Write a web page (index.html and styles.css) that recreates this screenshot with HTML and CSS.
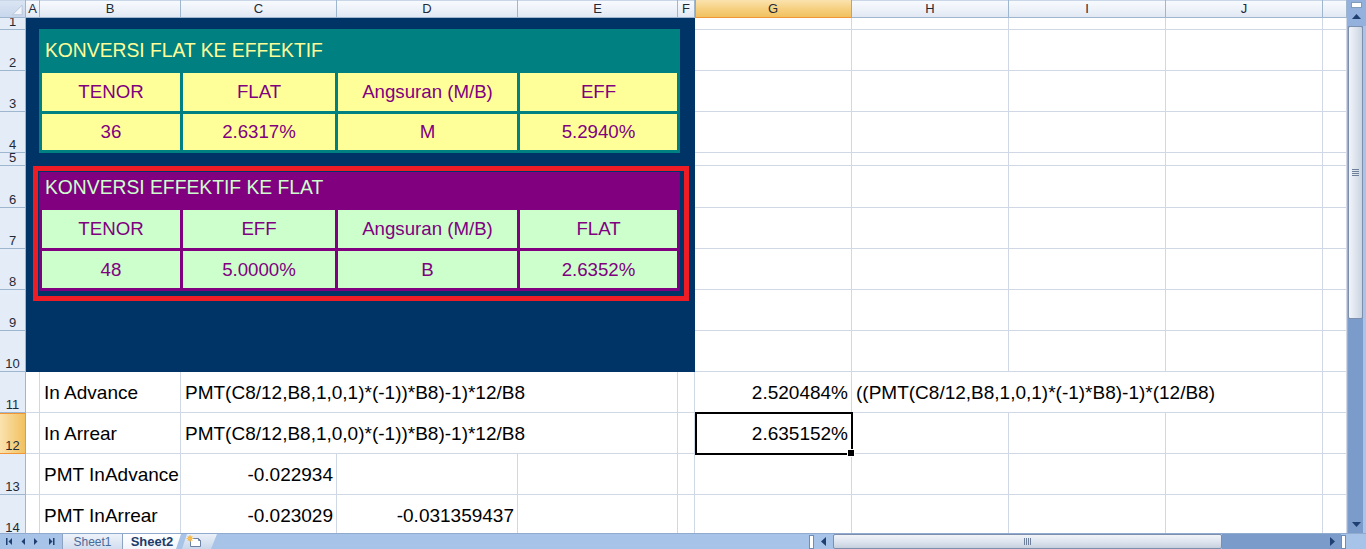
FILE: index.html
```html
<!DOCTYPE html>
<html>
<head>
<meta charset="utf-8">
<link rel="stylesheet" href="styles.css">
</head>
<body>
<div class="app">
  <div class="main">
    <div class="sheet">
      <div class="ch corner"><svg class="selall" width="26" height="18" viewBox="0 0 26 18"><polygon points="23,5 23,15 13,15" fill="#F2F5FA" stroke="#B8C6DA" stroke-width="1"/></svg></div>
      <div class="ch">A</div><div class="ch">B</div><div class="ch">C</div><div class="ch">D</div><div class="ch">E</div><div class="ch">F</div><div class="ch sel">G</div><div class="ch">H</div><div class="ch">I</div><div class="ch">J</div><div class="ch"></div>

      <div class="rh">1</div>
      <div class="navy">
        <div class="tbl t1">
          <div class="ttl">KONVERSI FLAT KE EFFEKTIF</div>
          <div class="cell">TENOR</div><div class="cell">FLAT</div><div class="cell">Angsuran (M/B)</div><div class="cell">EFF</div>
          <div class="cell">36</div><div class="cell">2.6317%</div><div class="cell">M</div><div class="cell">5.2940%</div>
        </div>
        <div class="redbox">
          <div class="tbl t2">
            <div class="ttl">KONVERSI EFFEKTIF KE FLAT</div>
            <div class="cell">TENOR</div><div class="cell">EFF</div><div class="cell">Angsuran (M/B)</div><div class="cell">FLAT</div>
            <div class="cell">48</div><div class="cell">5.0000%</div><div class="cell">B</div><div class="cell">2.6352%</div>
          </div>
        </div>
      </div>
      <div class="c"></div><div class="c"></div><div class="c"></div><div class="c"></div><div class="c"></div>
      <div class="rh">2</div><div class="c"></div><div class="c"></div><div class="c"></div><div class="c"></div><div class="c"></div>
      <div class="rh">3</div><div class="c"></div><div class="c"></div><div class="c"></div><div class="c"></div><div class="c"></div>
      <div class="rh">4</div><div class="c"></div><div class="c"></div><div class="c"></div><div class="c"></div><div class="c"></div>
      <div class="rh">5</div><div class="c"></div><div class="c"></div><div class="c"></div><div class="c"></div><div class="c"></div>
      <div class="rh">6</div><div class="c"></div><div class="c"></div><div class="c"></div><div class="c"></div><div class="c"></div>
      <div class="rh">7</div><div class="c"></div><div class="c"></div><div class="c"></div><div class="c"></div><div class="c"></div>
      <div class="rh">8</div><div class="c"></div><div class="c"></div><div class="c"></div><div class="c"></div><div class="c"></div>
      <div class="rh">9</div><div class="c"></div><div class="c"></div><div class="c"></div><div class="c"></div><div class="c"></div>
      <div class="rh">10</div><div class="c"></div><div class="c"></div><div class="c"></div><div class="c"></div><div class="c"></div>

      <div class="rh">11</div><div class="c"></div><div class="c">In Advance</div><div class="c span3">PMT(C8/12,B8,1,0,1)*(-1))*B8)-1)*12/B8</div><div class="c"></div><div class="c r">2.520484%</div><div class="c span3">((PMT(C8/12,B8,1,0,1)*(-1)*B8)-1)*(12/B8)</div><div class="c"></div>

      <div class="rh sel">12</div><div class="c"></div><div class="c">In Arrear</div><div class="c span3">PMT(C8/12,B8,1,0,0)*(-1))*B8)-1)*12/B8</div><div class="c"></div><div class="c r active">2.635152%</div><div class="c"></div><div class="c"></div><div class="c"></div><div class="c"></div>

      <div class="rh">13</div><div class="c"></div><div class="c">PMT InAdvance</div><div class="c r">-0.022934</div><div class="c"></div><div class="c"></div><div class="c"></div><div class="c"></div><div class="c"></div><div class="c"></div><div class="c"></div><div class="c"></div>

      <div class="rh">14</div><div class="c"></div><div class="c">PMT InArrear</div><div class="c r">-0.023029</div><div class="c r">-0.031359437</div><div class="c"></div><div class="c"></div><div class="c"></div><div class="c"></div><div class="c"></div><div class="c"></div><div class="c"></div>
    </div>

    <div class="vscroll">
      <div class="vtop">
        <div class="vsplit"></div>
        <svg class="varrow" width="9" height="5" viewBox="0 0 9 5"><polygon points="0,5 9,5 4.5,0" fill="#1E3F6F"/></svg>
      </div>
      <div class="vthumb"><div class="grip-h"></div><div class="grip-h"></div><div class="grip-h"></div><div class="grip-h"></div></div>
      <div class="vtrack"></div>
      <div class="vbot">
        <svg width="9" height="5" viewBox="0 0 9 5"><polygon points="0,0 9,0 4.5,5" fill="#1E3F6F"/></svg>
      </div>
    </div>
  </div>

  <div class="bottombar">
    <div class="tabnav">
      <svg width="62" height="16" viewBox="0 0 62 16">
        <rect x="6" y="5" width="1.5" height="7" fill="#1E3F6F"/>
        <polygon points="12,5 12,12 8.5,8.5" fill="#1E3F6F"/>
        <polygon points="25,5 25,12 21.5,8.5" fill="#1E3F6F"/>
        <polygon points="34,5 34,12 37.5,8.5" fill="#1E3F6F"/>
        <polygon points="49,5 49,12 52.5,8.5" fill="#1E3F6F"/>
        <rect x="53" y="5" width="1.5" height="7" fill="#1E3F6F"/>
      </svg>
    </div>
    <div class="tabs">
      <div class="tab">Sheet1</div>
      <div class="tab active">Sheet2</div>
      <div class="tab ins">
        <svg width="16" height="13" viewBox="0 0 16 13">
          <path d="M4.5 3.5 H12.5 L14.5 5.5 V11.5 H4.5 Z" fill="#FFFFFF" stroke="#6D82A3" stroke-width="1"/>
          <path d="M12.5 3.5 V5.5 H14.5" fill="none" stroke="#6D82A3" stroke-width="1"/>
          <circle cx="4" cy="3.5" r="2.2" fill="#F5A623"/>
          <path d="M4 0 V7 M0.5 3.5 H7.5 M1.5 1 L6.5 6 M6.5 1 L1.5 6" stroke="#F7C15A" stroke-width="1"/>
        </svg>
      </div>
    </div>
    <div class="spacer"></div>
    <div class="hscroll">
      <div class="hsplit"></div>
      <div class="hbtn"><svg width="5" height="9" viewBox="0 0 5 9"><polygon points="5,0 5,9 0,4.5" fill="#1E3F6F"/></svg></div>
      <div class="hthumb"><div class="grip-v"></div><div class="grip-v"></div><div class="grip-v"></div><div class="grip-v"></div></div>
      <div class="htrack"></div>
      <div class="hbtn r"><svg width="5" height="9" viewBox="0 0 5 9"><polygon points="0,0 0,9 5,4.5" fill="#1E3F6F"/></svg></div>
      <div class="hsplit end"></div>
    </div>
    <div class="bcorner"></div>
  </div>
</div>
</body>
</html>
```

FILE: styles.css
```css
* { box-sizing: border-box; margin: 0; padding: 0; }
html, body { width: 1366px; height: 549px; overflow: hidden; background: #fff; }
body { font-family: "Liberation Sans", Arial, sans-serif; color: #000; }

.app { display: flex; flex-direction: column; width: 1366px; height: 549px; }
.main { display: flex; height: 533px; }

.sheet {
  display: grid;
  width: 1347px;
  height: 533px;
  overflow: hidden;
  grid-template-columns: 26px 14px 141px 156px 181px 160px 17px 157px 157px 157px 157px 24px;
  grid-template-rows: 18px 12px 41px 41px 41px 13px 42px repeat(8, 41px);
}

/* column headers */
.ch {
  display: flex; align-items: center; justify-content: center;
  font-size: 13px; color: #1f2a36;
  background: linear-gradient(#F9FBFD, #EDF2F9 55%, #E1E8F3);
  border-right: 1px solid #9EB6CE;
  border-bottom: 1px solid #9EB6CE;
  box-shadow: inset 0 1px #C9D6E8;
}
.ch.sel {
  background: linear-gradient(#FBE2AE, #F6CF7E 55%, #F1C15F);
  border-right-color: #F29536;
  border-bottom-color: #F29536;
  box-shadow: inset 1px 0 #F29536;
}
.corner { background: linear-gradient(#DCE6F4, #C8D7EC); justify-content: flex-start; align-items: flex-start; }
.selall { display: block; }

/* row headers */
.rh {
  display: flex; align-items: flex-end; justify-content: center;
  font-size: 13px; line-height: 14px; color: #1f2a36;
  background: #E4ECF7;
  border-right: 1px solid #9EB6CE;
  border-bottom: 1px solid #9EB6CE;
  overflow: hidden;
}
.rh.sel {
  background: linear-gradient(to right, #FBE2AE, #F1C15F);
  border-bottom-color: #F29536;
  border-right-color: #F29536;
  box-shadow: inset 0 1px #F29536;
}

/* worksheet cells */
.c {
  display: flex; align-items: center;
  padding: 2px 4px 0;
  font-size: 19px;
  white-space: nowrap;
  background: #fff;
  border-right: 1px solid #D0D7E5;
  border-bottom: 1px solid #D0D7E5;
}
.c.r { justify-content: flex-end; padding-right: 3px; }
.span3 { grid-column: span 3; }

.c.active { position: relative; }
.c.active::after {
  content: ""; position: absolute;
  left: 0; top: -1px; right: -2px; bottom: -2px;
  border: 2px solid #000;
  z-index: 2;
}
.c.active::before {
  content: ""; position: absolute;
  right: -4px; bottom: -4px;
  width: 6px; height: 6px;
  background: #000; border: 1px solid #fff;
  z-index: 3;
}

/* merged navy block with the two conversion tables */
.navy {
  grid-column: span 6;
  grid-row: span 10;
  background: #003366;
  display: flex; flex-direction: column; align-items: flex-start;
  padding: 11px 0 0 7px;
}
.tbl {
  display: grid;
  grid-template-columns: 138px 152px 179px 157px;
  gap: 3px;
  padding: 0 3px 3px;
}
.tbl .ttl {
  grid-column: 1 / -1;
  display: flex; align-items: center;
  font-size: 19.3px;
  white-space: nowrap;
}
.tbl .cell {
  display: flex; align-items: center; justify-content: center;
  font-size: 18.67px; color: #800080;
  white-space: nowrap;
}
.t1 {
  margin-left: 6px;
  grid-template-rows: 41px 38px 36px;
  background: #008080;
}
.t1 .ttl { color: #FFFF99; padding: 2px 0 0 3px; }
.t1 .cell { background: #FFFF99; }

.redbox {
  margin-top: 13px;
  border: 5px solid #EE1C25;
  padding: 1px 4px 5px 1px;
}
.t2 {
  grid-template-rows: 35px 38px 37px;
  background: #800080;
}
.t2 .ttl { color: #CCFFCC; padding: 0 0 4px 3px; }
.t2 .cell { background: #CCFFCC; }

/* vertical scrollbar */
.vscroll {
  width: 19px; height: 533px;
  display: flex; flex-direction: column;
  background: #7B9BCB;
  box-shadow: inset -3px 0 #A9C4E8;
  border-left: 1px solid #9AB0CF;
}
.vtop {
  height: 26px;
  display: flex; flex-direction: column; align-items: center;
  padding-right: 2px;
  background: #93B1DC;
}
.vsplit {
  width: 11px; height: 6px; margin-top: 2px;
  background: #fff; border: 1px solid #7F9DB9;
}
.varrow { margin-top: 6px; }
.vthumb {
  height: 293px;
  margin: 0 3px 0 0;
  border: 1px solid #7D8FAD;
  border-radius: 2px;
  background: linear-gradient(to right, #F1F4F9, #DCE3ED 55%, #C9D3E1);
  display: flex; flex-direction: column; align-items: center; justify-content: center; gap: 1px;
}
.grip-h { width: 7px; height: 1px; background: #6E7F99; }
.vtrack { flex: 1; }
.vbot {
  height: 18px;
  display: flex; align-items: center; justify-content: center;
  padding-right: 2px;
}

/* bottom bar */
.bottombar {
  height: 16px;
  display: flex;
  background: #A8C3E8;
  border-top: 1px solid #8FA9CF;
}
.tabnav { width: 62px; height: 15px; }
.tabnav svg { display: block; margin-top: -1px; }
.tabs { display: flex; height: 15px; }
.tab {
  display: flex; align-items: center; justify-content: center;
  height: 15px;
  font-size: 12px; color: #4A6A98;
  border-left: 1px solid #8DA3C1;
  background: linear-gradient(#EEF3FA, #D2DDEE);
}
.tab:first-child { width: 60px; }
.tab.active {
  width: 59px;
  font-size: 13px; font-weight: bold; color: #1B3B6B;
  background: linear-gradient(#FFFFFF, #F0F4FA);
  clip-path: polygon(0 0, 100% 0, calc(100% - 5px) 100%, 0 100%);
}
.tab.ins {
  width: 40px;
  margin-left: -4px;
  border-left: none;
  background: linear-gradient(#EAF0F8, #C9D7EB);
  clip-path: polygon(5px 100%, 10px 0, 100% 0, calc(100% - 6px) 100%);
  justify-content: flex-start;
  padding-left: 9px;
}
.tab.ins svg { display: block; }
.spacer { flex: 1; }

.hscroll {
  width: 541px; height: 15px;
  display: flex; align-items: center;
  padding-left: 3px;
}
.hsplit {
  width: 5px; height: 14px;
  background: #fff; border: 1px solid #6F8DB5;
}
.hsplit.end { margin-right: 1px; }
.hbtn {
  width: 19px; height: 15px;
  display: flex; align-items: center; justify-content: center;
}
.hbtn.r { width: 17px; background: #7B9BCB; }
.hthumb {
  width: 389px; height: 15px;
  border: 1px solid #7D8FAD;
  border-radius: 2px;
  background: linear-gradient(#F1F4F9, #DCE3ED 55%, #C6D0DE);
  display: flex; align-items: center; justify-content: center; gap: 1px;
}
.grip-v { width: 1px; height: 7px; background: #6E7F99; }
.htrack { flex: 1; height: 15px; background: #7B9BCB; }
.bcorner { width: 19px; height: 15px; background: #A8C3E8; }
```
